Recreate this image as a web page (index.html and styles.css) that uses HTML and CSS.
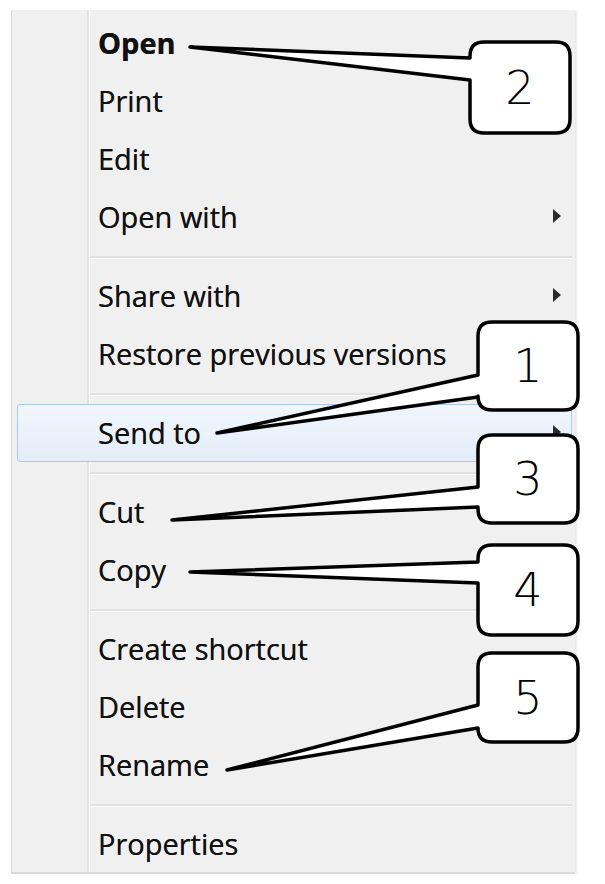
FILE: index.html
```html
<!DOCTYPE html>
<html lang="en">
<head>
    <meta charset="UTF-8">
    <meta name="viewport" content="width=device-width, initial-scale=1.0">
    <title>Context menu</title>
    <link rel="stylesheet" href="styles.css">
</head>
<body>
    <div class="menu">
        <ul class="menu-list">
            <li class="menu-item default">Open</li>
            <li class="menu-item">Print</li>
            <li class="menu-item">Edit</li>
            <li class="menu-item has-sub">Open with</li>
            <li class="separator"></li>
            <li class="menu-item has-sub">Share with</li>
            <li class="menu-item">Restore previous versions</li>
            <li class="separator"></li>
            <li class="menu-item has-sub hover">Send to</li>
            <li class="separator"></li>
            <li class="menu-item">Cut</li>
            <li class="menu-item">Copy</li>
            <li class="separator"></li>
            <li class="menu-item">Create shortcut</li>
            <li class="menu-item">Delete</li>
            <li class="menu-item">Rename</li>
            <li class="separator"></li>
            <li class="menu-item">Properties</li>
        </ul>
    </div>

    <!-- numbered callouts drawn over the menu -->
    <svg class="callouts" width="605" height="884" viewBox="0 0 605 884">
        <g class="bubble">
            <path d="M484 42 H556 Q570 42 570 56 V119 Q570 133 556 133 H484 Q470 133 470 119 V80 L190 47 L470 58 V56 Q470 42 484 42 Z"/>
            <text x="520" y="88">2</text>
        </g>
        <g class="bubble">
            <path d="M492 322 H564 Q578 322 578 336 V396 Q578 410 564 410 H492 Q478 410 478 396 V397 L217 433 L478 375 V336 Q478 322 492 322 Z"/>
            <text x="528" y="366">1</text>
        </g>
        <g class="bubble">
            <path d="M492 435 H564 Q578 435 578 449 V509 Q578 523 564 523 H492 Q478 523 478 509 V507 L172 520 L478 487 V449 Q478 435 492 435 Z"/>
            <text x="528" y="479">3</text>
        </g>
        <g class="bubble">
            <path d="M492 545 H564 Q578 545 578 559 V621 Q578 635 564 635 H492 Q478 635 478 621 V583 L190 572 L478 562 V559 Q478 545 492 545 Z"/>
            <text x="528" y="590">4</text>
        </g>
        <g class="bubble">
            <path d="M492 653 H564 Q578 653 578 667 V728 Q578 742 564 742 H492 Q478 742 478 728 L227 770 L478 705 V667 Q478 653 492 653 Z"/>
            <text x="528" y="698">5</text>
        </g>
    </svg>
</body>
</html>
```

FILE: styles.css
```css
html, body {
    margin: 0;
    background: #fff;
}
body {
    position: relative;
    width: 605px;
    height: 884px;
    padding: 10px 0 0 11px;
    box-sizing: border-box;
    font-family: "Open Sans", "Noto Sans", sans-serif;
}
.menu {
    width: 564px;
    height: 864px;
    box-sizing: border-box;
    background-color: #f0f0f0;
    background-image: linear-gradient(to right, transparent 75px, #e2e3e3 75px, #e2e3e3 77px, #fff 77px, #fff 78px, transparent 78px);
    border-left: 1px solid #d6d6d6;
    border-bottom: 2px solid #dadada;
    box-shadow: 3px 0 2px -1px #e8e8e8;
    padding: 4px 3px 0 5px;
}
.menu-list {
    list-style: none;
    margin: 0;
    padding: 0;
}
.menu-item {
    display: flex;
    align-items: center;
    height: 58px;
    box-sizing: border-box;
    padding: 0 10px 2px 80px;
    font-size: 29px;
    color: #111;
    text-shadow: 0 0 0.6px #333;
    border: 1px solid transparent;
    border-radius: 3px;
}
.menu-item.default {
    font-weight: 700;
}
.menu-item.has-sub::after {
    content: "";
    margin-left: auto;
    border-left: 8px solid #2a2a2a;
    border-top: 7px solid transparent;
    border-bottom: 7px solid transparent;
}
.menu-item.hover {
    border-color: #a9c9ef;
    background: linear-gradient(to bottom, #f1f6fc, #e3edf9);
}
.separator {
    height: 2px;
    margin: 10px 0 8px 73px;
    background: #e0e0e0;
    border-bottom: 1px solid #fff;
}
.callouts {
    position: absolute;
    left: 0;
    top: 0;
    pointer-events: none;
}
.bubble path {
    fill: #fff;
    stroke: #000;
    stroke-width: 3.5;
    stroke-linejoin: round;
}
.bubble text {
    font-family: "DejaVu Sans", sans-serif;
    font-size: 46px;
    font-weight: 300;
    text-anchor: middle;
    dominant-baseline: central;
    fill: #000;
}
```
